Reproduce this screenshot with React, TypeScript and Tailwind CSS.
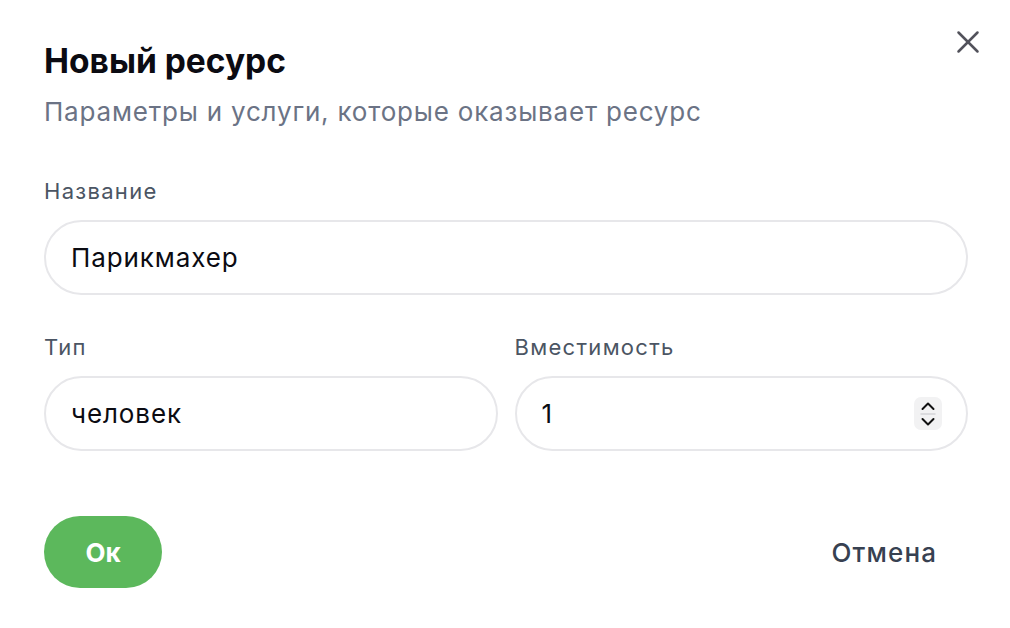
import { X } from 'lucide-react';

function Field({ label, value, spinner }: { label: string; value: string; spinner?: boolean }) {
  return (
    <div className="flex flex-col flex-1 min-w-0">
      <label className="text-[22px] leading-[28px] tracking-[1.3px] text-[#4b5563] mb-[15px]">{label}</label>
      <div className="h-[75px] rounded-full border-2 border-[#e7e7ea] flex items-center pl-[25px] pr-[24px]">
        <span className="flex-1 text-[26px] tracking-[0.9px] text-[#0b0b12]">{value}</span>
        {spinner && (
          <div className="w-[28px] h-[33px] rounded-[7px] bg-[#f2f2f3] flex flex-col items-center justify-center">
            <svg width="20" height="32" viewBox="0 0 20 32" fill="none" stroke="#111" strokeWidth="2" strokeLinecap="round" strokeLinejoin="round">
              <path d="M4.5 11 L10 5.5 L15.5 11" />
              <line x1="3" y1="16" x2="17" y2="16" stroke="#d4d4d8" strokeWidth="1.5" />
              <path d="M4.5 21 L10 26.5 L15.5 21" />
            </svg>
          </div>
        )}
      </div>
    </div>
  );
}

export default function App() {
  return (
    <div className="w-[1010px] h-[628px] bg-white relative font-['Inter',sans-serif] pl-[44px] pr-[42px] pt-[40px]">
      <button className="absolute right-[23px] top-[23px] text-[#52525b]">
        <X className="w-[38px] h-[38px]" strokeWidth={1.6} />
      </button>
      <h2 className="text-[33.5px] leading-[43px] font-bold text-[#0b0b12]">Новый ресурс</h2>
      <p className="text-[26px] leading-[32px] tracking-[0.8px] text-[#6b7385] mt-[13px]">Параметры и услуги, которые оказывает ресурс</p>
      <div className="mt-[49px] flex flex-col gap-[38px]">
        <Field label="Название" value="Парикмахер" />
        <div className="flex gap-[17px]">
          <Field label="Тип" value="человек" />
          <Field label="Вместимость" value="1" spinner />
        </div>
      </div>
      <div className="mt-[65px] flex items-center justify-between">
        <button className="w-[118px] h-[72px] rounded-full bg-[#5cb85c] text-white text-[26px] font-bold">Ок</button>
        <button className="text-[26px] tracking-[1.1px] font-medium text-[#374151] mr-[31px]">Отмена</button>
      </div>
    </div>
  );
}
